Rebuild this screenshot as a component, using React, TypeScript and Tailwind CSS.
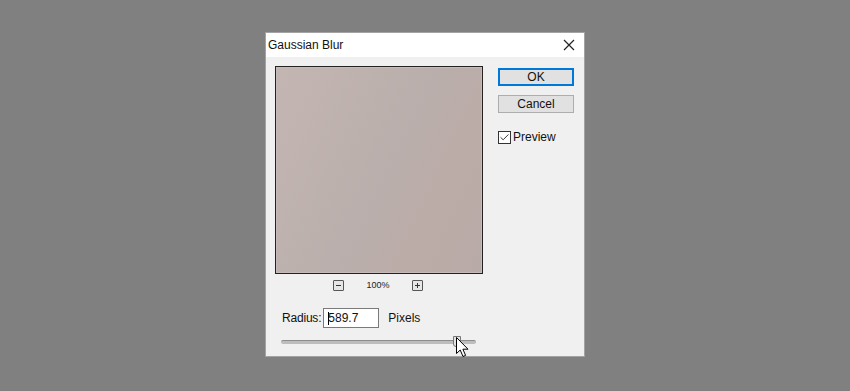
import { Check } from "lucide-react";

function ZoomBox({ plus }: { plus?: boolean }) {
  return (
    <div className="relative h-[11px] w-[11px] rounded-[1px] border border-[#555] bg-[#e6e6e6]">
      <div className="absolute left-[2px] top-[4px] h-px w-[5px] bg-[#333]" />
      {plus && <div className="absolute left-[4px] top-[2px] h-[5px] w-px bg-[#333]" />}
    </div>
  );
}

export default function App() {
  return (
    <div
      className="h-[391px] w-[850px] bg-[#808080] pl-[265px] pt-[32px]"
      style={{ fontFamily: '"Liberation Sans", Arial, sans-serif' }}
    >
      {/* Dialog window */}
      <div className="relative flex h-[325px] w-[320px] flex-col border border-[#a3a3a3] bg-[#f0f0f0]">
        {/* Title bar */}
        <div className="flex h-[24px] items-center justify-between bg-white pl-[2px] pr-[8px]">
          <span className="text-[12px] text-[#111]">Gaussian Blur</span>
          <svg width="12" height="12" viewBox="0 0 12 12" className="mr-[1px]">
            <path d="M1 1 L11 11 M11 1 L1 11" stroke="#222" strokeWidth="1.2" />
          </svg>
        </div>

        {/* Body */}
        <div className="flex pl-[9px] pt-[9px]">
          <div className="flex w-[208px] flex-col">
            {/* Preview */}
            <div className="h-[208px] w-[208px] border border-[#222] bg-[#c6baba] p-px">
              <div className="h-full w-full bg-[linear-gradient(115deg,#c3b5b2_0%,#bdb1ae_35%,#b9aeab_55%,#bcaca8_75%,#b8aaa7_100%)]" />
            </div>

            {/* Zoom controls */}
            <div className="mt-[6px] flex items-center justify-center gap-[22px] pr-[2px]">
              <ZoomBox />
              <span className="text-[9px] leading-[11px] text-[#222]">100%</span>
              <ZoomBox plus />
            </div>

            {/* Radius */}
            <div className="mt-[17px] flex items-center pl-[7px]">
              <span className="text-[12px] tracking-[-0.2px] text-[#111]">Radius:</span>
              <div className="relative ml-[2px] flex h-[20px] w-[56px] items-center border border-[#7a7a7a] bg-white pl-[4px]">
                <span className="text-[12px] text-[#111]">589.7</span>
                <div className="absolute left-[4px] top-[3px] h-[13px] w-px bg-black" />
              </div>
              <span className="ml-[9px] text-[12px] text-[#111]">Pixels</span>
            </div>

            {/* Slider */}
            <div className="relative ml-[6px] mt-[12px] h-[4px] w-[195px] rounded-full border-t border-[#8c8c8c] bg-[#bdbdbd]">
              <div className="absolute left-[172px] top-[-5px] h-[11px] w-[8px] rounded-b-[3px] border border-[#777] bg-[#e4e4e4]" />
              {/* Mouse pointer */}
              <svg
                width="14"
                height="22"
                viewBox="0 0 14 22"
                className="absolute left-[175px] top-[-4px]"
              >
                <path
                  d="M0.5 0.5 L0.5 16.5 L4.2 13 L7 19.5 L9.6 18.4 L6.9 12.2 L12 12.2 Z"
                  fill="white"
                  stroke="black"
                  strokeWidth="1"
                  strokeLinejoin="miter"
                />
              </svg>
            </div>
          </div>

          {/* Right column */}
          <div className="ml-[15px] flex flex-col pt-[2px]">
            <button className="flex h-[18px] w-[76px] items-center justify-center border-2 border-[#0078d7] bg-[#e1e1e1] text-[12px] text-[#111]">
              OK
            </button>
            <button className="mt-[9px] flex h-[18px] w-[76px] items-center justify-center border border-[#adadad] bg-[#e1e1e1] text-[12px] text-[#111]">
              Cancel
            </button>
            <label className="mt-[15px] flex items-center gap-[2px]">
              <span className="flex h-[13px] w-[13px] items-center justify-center border border-[#333] bg-white">
                <Check size={11} strokeWidth={2} className="text-[#222]" />
              </span>
              <span className="text-[12px] text-[#111]">Preview</span>
            </label>
          </div>
        </div>
      </div>
    </div>
  );
}
